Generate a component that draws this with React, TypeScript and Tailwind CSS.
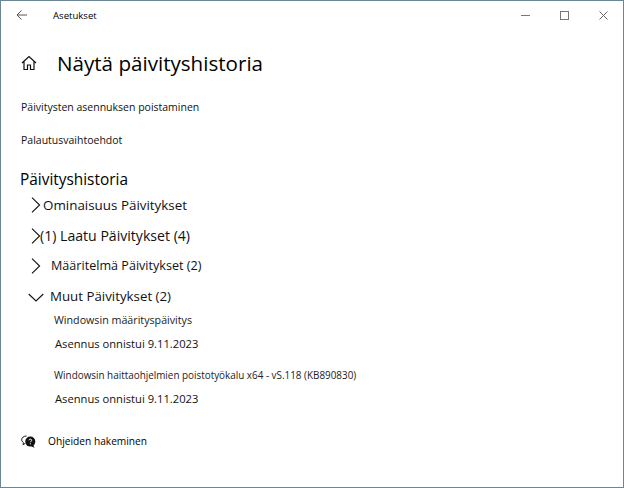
const FONT = "font-['Open_Sans','Noto_Sans',sans-serif]"

function ChevronRight() {
  return (
    <svg width="10" height="16" viewBox="0 0 10 16" fill="none" stroke="#111" strokeWidth="1.1" className="shrink-0">
      <path d="M1 .7 8.6 8 1 15.3" />
    </svg>
  )
}

function ChevronDown() {
  return (
    <svg width="16" height="9" viewBox="0 0 16 9" fill="none" stroke="#111" strokeWidth="1.1" className="shrink-0">
      <path d="M.7 1 8 8l7.3-7" />
    </svg>
  )
}

function UpdateItem({ name, small }: { name: string; small?: boolean }) {
  return (
    <div>
      <div className={`h-6 leading-6 pl-[53px] text-[#222] ${small ? "text-[9.9px]" : "text-[10.7px]"}`}>{name}</div>
      <div className="h-6 leading-6 pl-[54px] text-[11.2px] text-[#111]">Asennus onnistui 9.11.2023</div>
    </div>
  )
}

export default function App() {
  return (
    <div className={`w-[624px] h-[488px] bg-white border border-[#6b8796] flex flex-col overflow-hidden text-black ${FONT}`}>
      {/* otsikkopalkki */}
      <div className="h-[30px] flex items-center shrink-0">
        <svg width="11" height="10" viewBox="0 0 11 10" fill="none" stroke="#555" strokeWidth="1" className="ml-[15px] -mt-[3px]">
          <path d="M11 5H1M5.5 .5 1 5l4.5 4.5" />
        </svg>
        <span className="ml-[26px] mt-[1px] text-[9.6px]">Asetukset</span>
        <div className="ml-auto flex items-center gap-[30px] pr-[15px] -mt-[2px]">
          <svg width="9" height="9" viewBox="0 0 9 9" stroke="#777" fill="none"><path d="M0 4.5h9" /></svg>
          <svg width="9" height="9" viewBox="0 0 9 9" stroke="#777" fill="none"><rect x="0.5" y="0.5" width="8" height="8" /></svg>
          <svg width="9" height="9" viewBox="0 0 9 9" stroke="#666" fill="none"><path d="M0.5 0.5l8 8M8.5 0.5l-8 8" /></svg>
        </div>
      </div>

      <div className="flex items-center h-[40px] mt-[12px] pl-[20px]">
        <svg width="16" height="16" viewBox="0 0 16 16" fill="none" stroke="#111" strokeWidth="1.2">
          <path d="M1 8 8 1.5 15 8M3 6.5V14.5H6.5V10H9.5V14.5H13V6.5" />
        </svg>
        <h1 className="ml-[20px] text-[20.6px] font-normal leading-none">Näytä päivityshistoria</h1>
      </div>

      <div className="mt-[8px] pl-[20px] text-[10.5px] text-[#111] leading-[33px]">
        <div>Päivitysten asennuksen poistaminen</div>
        <div>Palautusvaihtoehdot</div>
      </div>

      <h2 className="mt-[11px] pl-[19px] text-[15.4px] font-normal leading-6">Päivityshistoria</h2>

      <div className="text-[#111]">
        <div className="flex items-center h-[26px] pl-[30px]">
          <ChevronRight />
          <span className="ml-[2px] text-[13.4px]">Ominaisuus Päivitykset</span>
        </div>
        <div className="flex items-center h-[30px] mt-[3px] pl-[30px]">
          <ChevronRight />
          <span className="-ml-[1px] text-[14.1px]">(1) Laatu Päivitykset (4)</span>
        </div>
        <div className="flex items-center h-[30px] pl-[30px]">
          <ChevronRight />
          <span className="ml-[10px] text-[12.6px]">Määritelmä Päivitykset (2)</span>
        </div>
        <div className="flex items-center h-[30px] mt-[1px] pl-[27px]">
          <ChevronDown />
          <span className="ml-[6px] text-[13.3px]">Muut Päivitykset (2)</span>
        </div>
      </div>

      <div className="-mt-[4px]">
        <UpdateItem name="Windowsin määrityspäivitys" />
        <div className="mt-[7px]">
          <UpdateItem name="Windowsin haittaohjelmien poistotyökalu x64 - vS.118 (KB890830)" small />
        </div>
      </div>

      <div className="flex items-center mt-[19px] h-6 pl-[20px]">
        <svg width="15" height="14" viewBox="0 0 15 14" className="-mt-[1px]">
          <path d="M5.5 1C2.8 1 .7 2.6.7 4.7c0 1.2.7 2.2 1.7 2.9L2 9.6l2.4-1.3" fill="none" stroke="#111" strokeWidth="1" />
          <circle cx="9.3" cy="6.6" r="5" fill="#111" />
          <path d="M12 10.5l1.8 2.3-3.6-1.2z" fill="#111" />
          <path d="M8 5.3c0-1.6 2.7-1.6 2.7 0 0 1-1.3 1-1.3 2M9.4 8.3v1" stroke="#fff" strokeWidth="1" fill="none" />
        </svg>
        <span className="ml-[12px] text-[10.2px]">Ohjeiden hakeminen</span>
      </div>
    </div>
  )
}
